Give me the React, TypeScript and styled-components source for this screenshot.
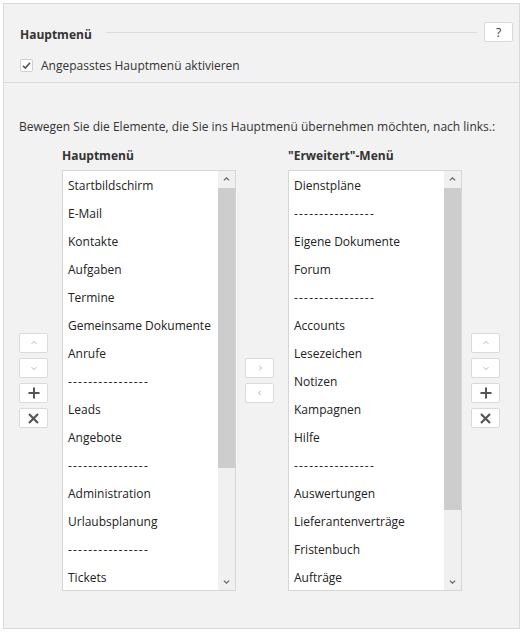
import React from "react";
import styled, { createGlobalStyle } from "styled-components";

const GlobalStyle = createGlobalStyle`
	html, body {
		margin: 0;
		padding: 0;
		background: #ffffff;
	}
	body {
		font-family: "Open Sans", "Noto Sans", "DejaVu Sans", sans-serif;
		font-size: 12px;
		color: #333333;
	}
	* {
		box-sizing: border-box;
	}
`;

const PANEL = styled.div`
	margin: 3px;
	width: 517px;
	height: 626px;
	background: #f2f2f2;
	border: 1px solid #dadada;
	display: flex;
	flex-direction: column;
`;

const TOP = styled.div`
	padding: 18px 6px 8px 16px;
	border-bottom: 1px solid #dadada;
`;

const TITLE_ROW = styled.div`
	display: flex;
	align-items: center;
	height: 20px;
`;

const TITLE = styled.span`
	font-weight: 700;
	color: #333;
	margin-top: 4px;
`;

const RULE = styled.div`
	flex: 1;
	height: 1px;
	background: #dcdcdc;
	margin: 0 7px 0 14px;
`;

const HELP = styled.button`
	width: 29px;
	height: 20px;
	background: #fff;
	border: 1px solid #dadada;
	border-radius: 2px;
	font: inherit;
	color: #333;
	padding: 0;
	cursor: pointer;
`;

const CHECK_ROW = styled.label`
	display: flex;
	align-items: center;
	height: 18px;
	margin-top: 14px;
	gap: 8px;
	color: #333;
`;

const CHECKBOX = styled.span`
	width: 13px;
	height: 13px;
	background: #fff;
	border: 1px solid #cfcfcf;
	border-radius: 2px;
	display: flex;
	align-items: center;
	justify-content: center;
`;

const BODY = styled.div`
	padding: 36px 0 0 15px;
`;

const INTRO = styled.div`
	line-height: 16px;
	color: #333;
	margin-bottom: 13px;
`;

const COLUMNS = styled.div`
	display: flex;
	align-items: flex-end;
`;

const STACK = styled.div<{ $ml: number; $mr: number }>`
	width: 29px;
	height: 421px;
	margin-left: ${(p) => p.$ml}px;
	margin-right: ${(p) => p.$mr}px;
	display: flex;
	flex-direction: column;
	justify-content: center;
	gap: 5px;
`;

const SMALL_BUTTON = styled.button`
	width: 29px;
	height: 20px;
	padding: 0;
	background: #fff;
	border: 1px solid #dadada;
	border-radius: 2px;
	display: flex;
	align-items: center;
	justify-content: center;
	cursor: pointer;
`;

const LIST_COLUMN = styled.div`
	display: flex;
	flex-direction: column;
	width: 174px;
`;

const LIST_HEADING = styled.div`
	font-weight: 700;
	line-height: 16px;
	color: #333;
	margin-bottom: 6px;
`;

const LISTBOX = styled.div`
	height: 421px;
	background: #fff;
	border: 1px solid #d6d6d6;
	display: flex;
	overflow: hidden;
`;

const ITEMS = styled.ul`
	flex: 1;
	list-style: none;
	margin: 0;
	padding: 1px 0 0 0;
	overflow: hidden;
`;

const ITEM = styled.li<{ $separator?: boolean }>`
	height: 28px;
	line-height: 28px;
	padding-left: 5px;
	color: #222;
	white-space: nowrap;
	letter-spacing: ${(p) => (p.$separator ? "1.2px" : "normal")};
`;

const SCROLLBAR = styled.div`
	width: 17px;
	background: #f0f0f0;
	display: flex;
	flex-direction: column;
`;

const ARROW = styled.div`
	height: 17px;
	display: flex;
	align-items: center;
	justify-content: center;
`;

const TRACK = styled.div`
	flex: 1;
	display: flex;
	flex-direction: column;
`;

const THUMB = styled.div`
	background: #cdcdcd;
`;

const Chevron = ({ dir, color, size = 7 }: { dir: "up" | "down" | "left" | "right"; color: string; size?: number }) => {
	const paths = {
		up: "M1 5 L4 2 L7 5",
		down: "M1 3 L4 6 L7 3",
		left: "M5 1 L2 4 L5 7",
		right: "M3 1 L6 4 L3 7",
	};
	return (
		<svg width={size} height={size} viewBox="0 0 8 8">
			<path d={paths[dir]} fill="none" stroke={color} strokeWidth="1.3" />
		</svg>
	);
};

const PlusIcon = () => (
	<svg width="12" height="12" viewBox="0 0 12 12">
		<path d="M6 0.5 V11.5 M0.5 6 H11.5" stroke="#555" strokeWidth="2" />
	</svg>
);

const CrossIcon = () => (
	<svg width="11" height="11" viewBox="0 0 11 11">
		<path d="M1 1 L10 10 M10 1 L1 10" stroke="#555" strokeWidth="2.2" />
	</svg>
);

const SEP = "----------------";

const mainItems = [
	"Startbildschirm",
	"E-Mail",
	"Kontakte",
	"Aufgaben",
	"Termine",
	"Gemeinsame Dokumente",
	"Anrufe",
	SEP,
	"Leads",
	"Angebote",
	SEP,
	"Administration",
	"Urlaubsplanung",
	SEP,
	"Tickets",
];

const extraItems = [
	"Dienstpläne",
	SEP,
	"Eigene Dokumente",
	"Forum",
	SEP,
	"Accounts",
	"Lesezeichen",
	"Notizen",
	"Kampagnen",
	"Hilfe",
	SEP,
	"Auswertungen",
	"Lieferantenverträge",
	"Fristenbuch",
	"Aufträge",
];

type ListProps = {
	heading: string;
	items: string[];
	thumbHeight: number;
};

function List({ heading, items, thumbHeight }: ListProps) {
	return (
		<LIST_COLUMN>
			<LIST_HEADING>{heading}</LIST_HEADING>
			<LISTBOX>
				<ITEMS>
					{items.map((item, i) => (
						<ITEM key={i} $separator={item === SEP}>
							{item}
						</ITEM>
					))}
				</ITEMS>
				<SCROLLBAR>
					<ARROW>
						<Chevron dir="up" color="#606060" />
					</ARROW>
					<TRACK>
						<THUMB style={{ height: thumbHeight }} />
					</TRACK>
					<ARROW>
						<Chevron dir="down" color="#606060" />
					</ARROW>
				</SCROLLBAR>
			</LISTBOX>
		</LIST_COLUMN>
	);
}

function OrderButtons({ ml, mr }: { ml: number; mr: number }) {
	return (
		<STACK $ml={ml} $mr={mr}>
			<SMALL_BUTTON>
				<Chevron dir="up" color="#b0b0b0" size={6} />
			</SMALL_BUTTON>
			<SMALL_BUTTON>
				<Chevron dir="down" color="#b0b0b0" size={6} />
			</SMALL_BUTTON>
			<SMALL_BUTTON>
				<PlusIcon />
			</SMALL_BUTTON>
			<SMALL_BUTTON>
				<CrossIcon />
			</SMALL_BUTTON>
		</STACK>
	);
}

export default function App() {
	return (
		<>
			<GlobalStyle />
			<PANEL>
				<TOP>
					<TITLE_ROW>
						<TITLE>Hauptmenü</TITLE>
						<RULE />
						<HELP>?</HELP>
					</TITLE_ROW>
					<CHECK_ROW>
						<CHECKBOX>
							<svg width="9" height="9" viewBox="0 0 9 9">
								<path d="M1 4.8 L3.4 7 L8 1.8" fill="none" stroke="#555" strokeWidth="1.6" />
							</svg>
						</CHECKBOX>
						Angepasstes Hauptmenü aktivieren
					</CHECK_ROW>
				</TOP>
				<BODY>
					<INTRO>
						Bewegen Sie die Elemente, die Sie ins Hauptmenü übernehmen möchten, nach links.:
					</INTRO>
					<COLUMNS>
						<OrderButtons ml={0} mr={14} />
						<List heading="Hauptmenü" items={mainItems} thumbHeight={280} />
						<STACK $ml={9} $mr={14}>
							<SMALL_BUTTON>
								<Chevron dir="right" color="#b0b0b0" size={6} />
							</SMALL_BUTTON>
							<SMALL_BUTTON>
								<Chevron dir="left" color="#b0b0b0" size={6} />
							</SMALL_BUTTON>
						</STACK>
						<List heading={'"Erweitert"-Menü'} items={extraItems} thumbHeight={322} />
						<OrderButtons ml={9} mr={0} />
					</COLUMNS>
				</BODY>
			</PANEL>
		</>
	);
}
